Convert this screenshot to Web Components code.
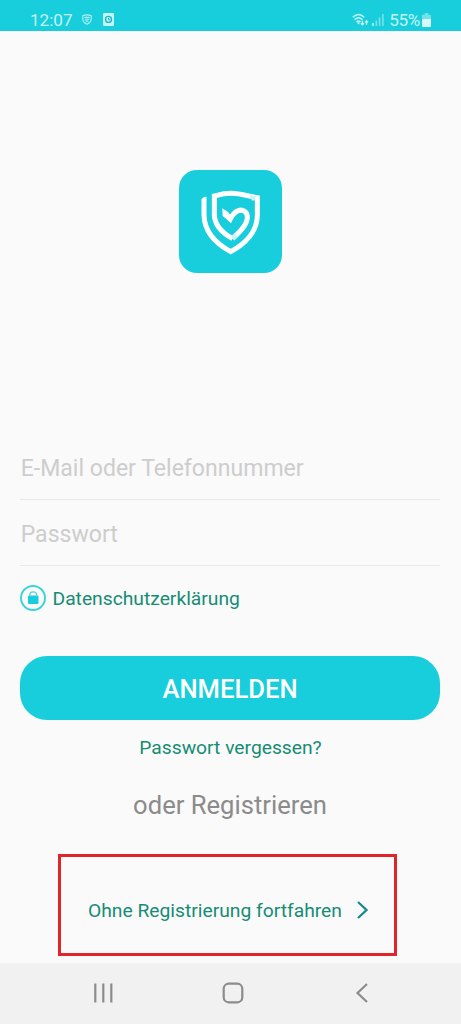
<!DOCTYPE html>
<html lang="de">
<head>
<meta charset="utf-8">
<title>Anmelden</title>
<style>
html,body{margin:0;height:100%;overflow:hidden;background:#fafafa;font-family:Roboto,"Liberation Sans",sans-serif}
</style>
</head>
<body>
<login-screen></login-screen>
<script>
const define = (name, html) => customElements.define(name, class extends HTMLElement {
  constructor() {
    super();
    const t = document.createElement('template');
    t.innerHTML = html;
    this.attachShadow({mode: 'open'}).append(t.content.cloneNode(true));
  }
});

define('status-bar', `
<style>
:host{display:flex;align-items:center;height:31px;box-sizing:border-box;background:#18cedc;color:#c4f5f8;padding:8px 30px 0 30px;font-size:17.1px;line-height:24px}
svg{display:block;flex:none}
.shield{margin-left:9px}.app{margin-left:11px}.wifi{margin-left:auto}.signal{margin-left:3px}.pct{margin-left:5px;letter-spacing:-.3px}.bat{margin-left:2px}
</style>
<span>12:07</span>
<svg class="shield" width="10" height="11" viewBox="0 0 10 11" fill="none" stroke="#b4f1f5" stroke-width="1.1"><path d="M.8 1.7Q5 .1 9.2 1.7V5Q9 8.5 5 10.2Q1 8.5.8 5Z"/><path d="M2.5 3.4h5M2.8 5.2h4.5M3.6 7.1h2.8"/></svg>
<svg class="app" width="11" height="13" viewBox="0 0 11 13"><rect width="11" height="13" rx="1" fill="#c4f5f8"/><circle cx="5.5" cy="6.4" r="3" fill="none" stroke="#18b8c8" stroke-width="1.4"/><path d="M5.5 5v1.8h1.6" fill="none" stroke="#18b8c8"/></svg>
<svg class="wifi" width="17" height="14" viewBox="0 0 17 14" fill="none" stroke="#c4f5f8" stroke-width="1.5"><path d="M.8 4.2Q6.5-1.3 12.2 4.2M2.7 6.6Q6.5 3 10.3 6.6M4.5 8.9Q6.5 7 8.5 8.9"/><path d="M6.5 9.2v2" stroke-width="2"/><path d="M10.4 7.5v4.2M8.9 10.3l1.5 1.6 1.5-1.6M14.5 12V8M13 9.4l1.5-1.6L16 9.4" stroke-width="1.3"/></svg>
<svg class="signal" width="12" height="13" viewBox="0 0 12 13" stroke-width="1.5"><path d="M1 10v3" stroke="#c4f5f8"/><path d="M4.3 7.5V13M7.6 4.5V13M10.9 1V13" stroke="#7fe2ea"/></svg>
<span class="pct">55%</span>
<svg class="bat" width="9" height="14" viewBox="0 0 9 14"><path d="M2.8 0h3.4v1.8H8q1 0 1 1V6H0V2.8q0-1 1-1h1.8Z" fill="#76e0e8"/><path d="M0 6h9v7q0 1-1 1H1q-1 0-1-1Z" fill="#d5f9fa"/></svg>
`);

define('app-logo', `
<style>:host{display:block;width:103px;height:103px;border-radius:18px;background:#18cedc}svg{display:block}</style>
<svg width="103" height="103" viewBox="27 31 309 309" fill="none" stroke="#fff" stroke-width="15">
<path d="M102 111V166C103 216 140 253 182 276C225 253 262 216 262 166V114C236 110 212 101 182 101C160 101 148 105 133 109V165C134 198 158 221 188 237"/>
<path d="M188 237C209 217 231 196 232 174C233 156 218 148 205 153C194 157 186 168 181 178L164 159"/>
<path d="M93 119L111 106V100H93Z" fill="#18cedc" stroke="none"/>
<path d="M157 146L174 157L180 166V187L158 169Z" fill="#fff" stroke="none"/>
<path d="M239 106L256 109L257 121L246 123Z M184 230L195 222L203 232L192 241Z" fill="#c9f4f7" stroke="none"/>
</svg>`);

define('text-field', `
<style>:host{display:flex;align-items:center;height:66px;box-sizing:border-box;border-bottom:1px solid #e9e9e9;color:#cdcdcd;font-size:23.05px;line-height:28px;padding:5px 0 0 .7px}</style>
<slot></slot>`);

define('privacy-link', `
<style>:host{display:flex;align-items:center;gap:6.5px;height:28px;color:#158c74;font-size:19.25px;line-height:26px}svg{display:block}span{padding-top:2px}</style>
<svg width="26" height="26" viewBox="0 0 26 26"><circle cx="13" cy="13" r="12" fill="none" stroke="#3bd3da" stroke-width="1.9"/><rect x="8" y="10.5" width="10.5" height="8.5" rx="1" fill="#18cedc"/><path d="M9.8 11.5V10Q9.8 6.9 13.2 6.9T16.6 10v1.5" fill="none" stroke="#55d3da" stroke-width="1.3"/></svg>
<span><slot></slot></span>`);

define('primary-button', `
<style>:host{display:flex;align-items:center;justify-content:center;height:64px;border-radius:27px;background:#18cedc;color:#fff;font-size:25.6px;font-weight:500;line-height:30px}span{padding-top:2px}</style>
<span><slot></slot></span>`);

define('guest-link', `
<style>:host{display:flex;align-items:center;box-sizing:border-box;width:339px;height:102px;border:3px solid #e0242c;padding:12px 0 0 27px;color:#158c74;font-size:19.25px;line-height:26px}svg{display:block;margin:-2px 0 0 15px}</style>
<slot></slot>
<svg width="12" height="18" viewBox="0 0 12 18" fill="none" stroke="#168894" stroke-width="2.3"><path d="M1 1L9.5 9L1 17"/></svg>`);

define('nav-bar', `
<style>:host{display:flex;align-items:center;justify-content:space-between;box-sizing:border-box;height:61px;background:#f1f1f1;padding:0 92px 1px 93px}svg{display:block}.home{margin-right:4px}</style>
<svg width="21" height="20" viewBox="0 0 21 20" stroke="#8c8c8c" stroke-width="2.2"><path d="M2.3.5v19M10.3.5v19M18.3.5v19"/></svg>
<svg class="home" width="22" height="22" viewBox="0 0 22 22"><rect x="1.7" y="1.7" width="18.6" height="18.6" rx="5" fill="none" stroke="#8c8c8c" stroke-width="2.2"/></svg>
<svg width="14" height="20" viewBox="0 0 14 20" fill="none" stroke="#8c8c8c" stroke-width="2.2"><path d="M12 1L2.5 10L12 19"/></svg>`);

define('login-screen', `
<style>
:host{display:flex;flex-direction:column;width:461px;height:1024px;background:#fafafa}
main{flex:1;display:flex;flex-direction:column;padding:0 21px 0 20px}
app-logo{margin:139px auto 0 159px}
form{display:flex;flex-direction:column;margin-top:161px}
privacy-link{margin-top:18px}
primary-button{margin-top:44px}
.forgot,.or{text-align:center}
.forgot{margin-top:15px;padding-left:1px;color:#158c74;font-size:19.25px;line-height:26px}
.or{margin-top:27px;color:#8b8b8b;font-size:25.6px;line-height:34px}
guest-link{margin:32px 0 0 38px}
</style>
<status-bar></status-bar>
<main>
<app-logo></app-logo>
<form><text-field>E-Mail oder Telefonnummer</text-field><text-field>Passwort</text-field></form>
<privacy-link>Datenschutzerklärung</privacy-link>
<primary-button>ANMELDEN</primary-button>
<div class="forgot">Passwort vergessen?</div>
<div class="or">oder Registrieren</div>
<guest-link>Ohne Registrierung fortfahren</guest-link>
</main>
<nav-bar></nav-bar>`);
</script>
</body>
</html>
